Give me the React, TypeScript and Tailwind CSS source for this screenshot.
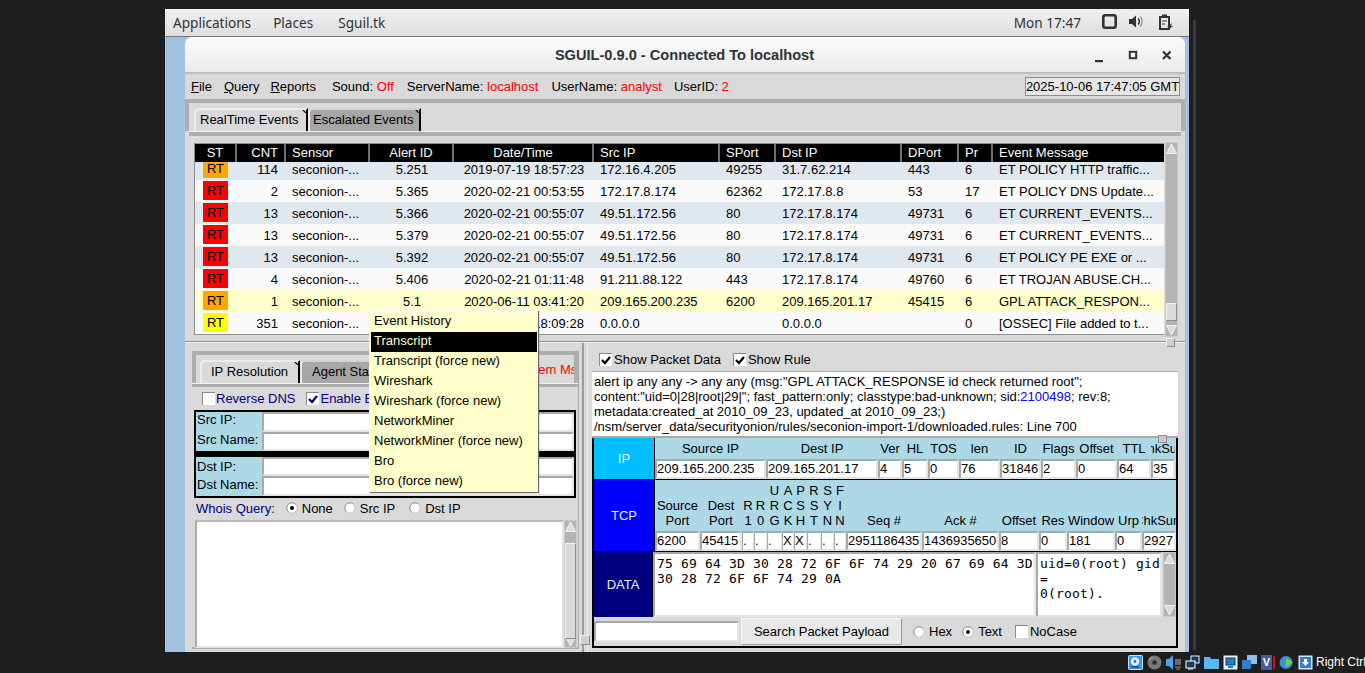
import React from "react";

const sunken = "border-2 border-t-[#a9a9a9] border-l-[#a9a9a9] border-b-[#e4e4e4] border-r-[#e4e4e4] bg-white";
const sunkenThin = "border-t-2 border-b-2 border-l border-r border-t-[#a9a9a9] border-l-[#a9a9a9] border-b-[#e4e4e4] border-r-[#e4e4e4] bg-white";

function Check({ on, color = "#000" }: { on?: boolean; color?: string }) {
  return (
    <span className="block w-[13px] h-[13px] shrink-0 bg-white border-t border-l border-[#8a8a8a]">
      {on && (
        <svg width="12" height="12" viewBox="0 0 12 12" className="block">
          <path d="M2 6 L5 9 L10 3" fill="none" stroke={color} strokeWidth="2.2" />
        </svg>
      )}
    </span>
  );
}

function Radio({ on }: { on?: boolean }) {
  return (
    <svg width="12" height="12" viewBox="0 0 12 12" className="shrink-0 block">
      <circle cx="6" cy="6" r="5.2" fill="#fff" stroke="#c4c4c4" />
      <path d="M2.3 9.7 A5.2 5.2 0 0 1 9.7 2.3" fill="none" stroke="#9a9a9a" />
      {on && <circle cx="6" cy="6" r="2" fill="#000" />}
    </svg>
  );
}

function Scrollbar({ className = "", thumbTop = 0, thumbH = 0 }: { className?: string; thumbTop?: number; thumbH?: number }) {
  return (
    <div className={"w-[13px] flex flex-col bg-[#b3b3b3] border border-[#c9c9c9] " + className}>
      <svg width="11" height="11" viewBox="0 0 11 11" className="block shrink-0">
        <path d="M5.5 1 L10.5 10.5 L0.5 10.5 Z" fill="#dcdcdc" stroke="#f2f2f2" />
      </svg>
      <div className="flex-1 relative">
        {thumbH > 0 && <div className="absolute left-0 w-[11px] bg-[#dadada] border border-t-[#f2f2f2] border-l-[#f2f2f2] border-b-[#8c8c8c] border-r-[#8c8c8c]" style={{ top: thumbTop, height: thumbH }} />}
      </div>
      <svg width="11" height="11" viewBox="0 0 11 11" className="block shrink-0">
        <path d="M5.5 10 L10.5 0.5 L0.5 0.5 Z" fill="#dcdcdc" stroke="#f2f2f2" />
      </svg>
    </div>
  );
}

const cols = ["ST", "CNT", "Sensor", "Alert ID", "Date/Time", "Src IP", "SPort", "Dst IP", "DPort", "Pr", "Event Message"];
const hAlign = ["text-center", "text-right pr-[6px]", "pl-[6px]", "text-center", "text-center", "pl-[6px]", "pl-[6px]", "pl-[6px]", "pl-[6px]", "pl-[6px]", "pl-[6px]"];

const rows: [string, string, string, string, string, string, string, string, string, string, string][] = [
  ["#ffa500", "114", "5.251", "2019-07-19 18:57:23", "172.16.4.205", "49255", "31.7.62.214", "443", "6", "ET POLICY HTTP traffic...", "#dfe7ef"],
  ["#ff0000", "2", "5.365", "2020-02-21 00:53:55", "172.17.8.174", "62362", "172.17.8.8", "53", "17", "ET POLICY DNS Update...", "#fafafa"],
  ["#ff0000", "13", "5.366", "2020-02-21 00:55:07", "49.51.172.56", "80", "172.17.8.174", "49731", "6", "ET CURRENT_EVENTS...", "#dfe7ef"],
  ["#ff0000", "13", "5.379", "2020-02-21 00:55:07", "49.51.172.56", "80", "172.17.8.174", "49731", "6", "ET CURRENT_EVENTS...", "#fafafa"],
  ["#ff0000", "13", "5.392", "2020-02-21 00:55:07", "49.51.172.56", "80", "172.17.8.174", "49731", "6", "ET POLICY PE EXE or ...", "#dfe7ef"],
  ["#ff0000", "4", "5.406", "2020-02-21 01:11:48", "91.211.88.122", "443", "172.17.8.174", "49760", "6", "ET TROJAN ABUSE.CH...", "#fafafa"],
  ["#ffa500", "1", "5.1", "2020-06-11 03:41:20", "209.165.200.235", "6200", "209.165.201.17", "45415", "6", "GPL ATTACK_RESPON...", "#ffffcc"],
  ["#ffff00", "351", "", "2020-06-11 18:09:28", "0.0.0.0", "", "0.0.0.0", "", "0", "[OSSEC] File added to t...", "#fafafa"],
];

const menu = ["Event History", "Transcript", "Transcript (force new)", "Wireshark", "Wireshark (force new)", "NetworkMiner", "NetworkMiner (force new)", "Bro", "Bro (force new)"];

const ipCols = [
  ["Source IP", "209.165.200.235", 111], ["Dest IP", "209.165.201.17", 112], ["Ver", "4", 24], ["HL", "5", 26], ["TOS", "0", 31], ["len", "76", 41],
  ["ID", "31846", 41], ["Flags", "2", 35], ["Offset", "0", 41], ["TTL", "64", 34], ["ChkSum", "35", 24],
] as const;

const tcpCols: [string[], string, number][] = [
  [["Source", "Port"], "6200", 45], [["Dest", "Port"], "45415", 42], [["R", "1"], ".", 12], [["R", "0"], ".", 13], [["U", "R", "G"], ".", 15],
  [["A", "C", "K"], "X", 12], [["P", "S", "H"], "X", 13], [["R", "S", "T"], ".", 14], [["S", "Y", "N"], ".", 13], [["F", "I", "N"], ".", 12],
  [["Seq #"], "2951186435", 76], [["Ack #"], "1436935650", 77], [["Offset"], "8", 40], [["Res"], "0", 28], [["Window"], "181", 48], [["Urp"], "0", 27], [["ChkSum"], "2927", 34],
];

function Tab({ label, active, w, pl }: { label: string; active?: boolean; w: string; pl: string }) {
  return (
    <div className={`relative h-full ${w} ${pl} pb-[3px] shrink-0 flex items-center rounded-tl-[5px] border-t-2 border-l-2 border-[#ececec] border-r-2 border-r-black whitespace-nowrap overflow-hidden ${active ? "bg-[#d9d9d9]" : "bg-[#a6a6a6] border-t-[#d4d4d4] border-l-0"}`}>
      {label}
      <svg width="5" height="5" viewBox="0 0 5 5" className="absolute right-0 -top-[2px]">
        <path d="M0 0 L5 5" stroke="#000" strokeWidth="1.2" />
      </svg>
    </div>
  );
}

function Field({ label, h, lift }: { label: string; h: string; lift?: boolean }) {
  return (
    <div className={"flex items-stretch " + h}>
      <div className={"pl-[1px] w-[66px] shrink-0 flex items-center " + (lift ? "pb-[4px]" : "")}>{label}</div>
      <div className={sunken + " flex-1"} />
    </div>
  );
}

function Icons() {
  return (
    <div className="flex items-center gap-[4px] mr-[3px]">
      <svg width="15" height="15" viewBox="0 0 15 15"><rect x="0.5" y="0.5" width="14" height="14" rx="1" fill="#3f97e6" stroke="#bfe0ff" /><circle cx="7" cy="6.5" r="4.2" fill="#dff0ff" /><circle cx="7" cy="6.5" r="1.4" fill="#2a6fb8" /><path d="M3 12h8" stroke="#123a66" strokeWidth="1.4" /></svg>
      <svg width="15" height="15" viewBox="0 0 15 15"><circle cx="7.5" cy="7.5" r="7" fill="#777" /><circle cx="7.5" cy="7.5" r="2.2" fill="#2a2a2a" /><path d="M2.5 5a6 6 0 0 1 3-3" stroke="#9c9c9c" strokeWidth="1.4" fill="none" /></svg>
      <svg width="15" height="15" viewBox="0 0 15 15"><path d="M0 4h3l4-4v15l-4-4H0z" fill="#45a6e8" /><rect x="9" y="4" width="6" height="6" fill="#6b6b6b" /><path d="M9 12h6M10 14h4" stroke="#6b6b6b" strokeWidth="1.4" /></svg>
      <svg width="15" height="15" viewBox="0 0 15 15"><rect x="6" y="1" width="8" height="7" fill="#163a66" stroke="#eaf4ff" /><rect x="1" y="6" width="9" height="7" fill="#163a66" stroke="#fff" /><path d="M3 14h5" stroke="#fff" /></svg>
      <svg width="15" height="15" viewBox="0 0 15 15"><path d="M0 2h6l1 2h8v10H0z" fill="#5ab6ec" /></svg>
      <svg width="15" height="15" viewBox="0 0 15 15"><rect x="0.5" y="0.5" width="14" height="14" fill="#dff0ff" /><rect x="3" y="3" width="9" height="7" fill="#2a76c8" stroke="#123a66" /><rect x="5" y="11" width="5" height="2" fill="#2a76c8" /></svg>
      <svg width="15" height="15" viewBox="0 0 15 15"><rect x="5" y="0" width="10" height="9" fill="#8cc0ee" /><rect x="0" y="5" width="9" height="9" fill="#2f7fd0" /></svg>
      <div className="flex items-center gap-[1px]">
        <div className="w-[11px] h-[15px] bg-[#4a5a9a] flex items-center justify-center text-white text-[11px] font-bold leading-none">V</div>
        <div className="w-[2px] h-[13px] bg-[#d01010]" />
      </div>
      <svg width="15" height="15" viewBox="0 0 15 15"><circle cx="7" cy="7.5" r="6.5" fill="#3c8fd8" /><path d="M7 3l7 4.5-7 4.5z" fill="#70d040" /></svg>
      <svg width="15" height="15" viewBox="0 0 15 15"><rect x="0.5" y="0.5" width="14" height="14" fill="#cfe8ff" /><rect x="2" y="2" width="11" height="11" fill="#2f7fd0" /><path d="M7.5 11L4 7h2V4h3v3h2z" fill="#fff" /></svg>
    </div>
  );
}

export default function App() {
  return (
    <div className="w-[1365px] h-[673px] bg-[#1e1e1e] overflow-hidden relative text-[13px] leading-[15px] text-black" style={{ fontFamily: '"Liberation Sans", Arial, sans-serif' }}>
      <div className="absolute left-[1193px] top-[20px] w-[3px] h-[630px] bg-[#3a3a3a]" />
      {/* desktop */}
      <div className="absolute left-[165px] top-[9px] w-[1024px] h-[643px] bg-[#a3c1e0] flex flex-col overflow-hidden">
        {/* gnome bar */}
        <div className="h-[28px] shrink-0 flex items-center pl-[8px] pr-[15px] pb-[1px] bg-gradient-to-b from-[#f0f0f0] to-[#dedede] border-b border-[#777] text-[#2e3436] text-[13.6px]" style={{ fontFamily: '"Noto Sans", sans-serif' }}>
          <span>Applications</span>
          <span className="ml-[22px]">Places</span>
          <span className="ml-[25px]">Sguil.tk</span>
          <span className="ml-auto">Mon 17:47</span>
          <svg width="16" height="16" viewBox="0 0 16 16" className="ml-[21px]"><rect x="1.3" y="1.3" width="12.4" height="12.4" rx="2" fill="none" stroke="#2e3436" strokeWidth="2.6" /></svg>
          <svg width="16" height="16" viewBox="0 0 16 16" className="ml-[10px]"><path d="M1 5h3l4-3.5v12L4 10H1z" fill="#2e3436" /><path d="M10 4.5a4 4 0 0 1 0 6" fill="none" stroke="#2e3436" strokeWidth="1.5" /><path d="M12 2.5a7 7 0 0 1 0 10" fill="none" stroke="#9a9a9a" strokeWidth="1.5" /></svg>
          <svg width="16" height="17" viewBox="0 0 16 17" className="ml-[14px]"><path d="M2 3h9v12H2z" fill="none" stroke="#2e3436" strokeWidth="2" /><rect x="4" y="0.5" width="5" height="3" fill="#2e3436" /><path d="M4 7h5M4 10h3" stroke="#2e3436" /><path d="M9 13l5-4-1 3h2l-5 4 1-3z" fill="#2e3436" /></svg>
        </div>

        {/* window */}
        <div className="ml-[20px] w-[1000px] flex-1 flex flex-col rounded-t-[7px] overflow-hidden bg-[#d9d9d9]">
          <div className="h-[37px] shrink-0 relative flex items-center justify-center pt-[2px] pr-[1px] bg-gradient-to-b from-[#fbfbfb] to-[#ebebeb] border-b-2 border-[#bdbdbd] text-[#2e3436] font-bold text-[14.6px]">
            <span>SGUIL-0.9.0 - Connected To localhost</span>
            <div className="absolute right-[11px] top-[13px] flex items-center gap-[18px]">
              <svg width="16" height="14" viewBox="0 0 16 14"><rect x="3" y="10" width="8" height="2.2" fill="#2e3436" /></svg>
              <svg width="16" height="14" viewBox="0 0 16 14"><rect x="3.8" y="1.8" width="6.4" height="6.4" fill="none" stroke="#2e3436" strokeWidth="2" /></svg>
              <svg width="14" height="14" viewBox="0 0 14 14"><path d="M3 1.5l7.5 7.5M10.5 1.5L3 9" stroke="#2e3436" strokeWidth="2.2" /></svg>
            </div>
          </div>

          {/* menu row */}
          <div className="h-[25px] shrink-0 flex items-center pl-[6px] pr-[5px] whitespace-nowrap">
            <span><u>F</u>ile</span>
            <span className="ml-[12px]"><u>Q</u>uery</span>
            <span className="ml-[11px]"><u>R</u>eports</span>
            <span className="ml-[16px]">Sound: <span className="text-[#ff0000]">Off</span></span>
            <span className="ml-[13px]">ServerName: <span className="text-[#ff0000]">localhost</span></span>
            <span className="ml-[13px]">UserName: <span className="text-[#ff0000]">analyst</span></span>
            <span className="ml-[12px]">UserID: <span className="text-[#ff0000]">2</span></span>
            <span className="ml-auto w-[155px] h-[19px] border border-[#8e8e8e] bg-[#e6e6e6] flex items-center justify-center overflow-hidden">2025-10-06 17:47:05 GMT</span>
          </div>

          {/* notebook */}
          <div className="border-t-[4px] border-x-[4px] border-[#adadad] h-[32px] shrink-0 bg-[#d9d9d9] pt-[5px] pl-[5px]">
            <div className="h-[23px] flex">
              <Tab label="RealTime Events" active w="w-[114px]" pl="pl-[4px]" />
              <Tab label="Escalated Events" w="w-[113px]" pl="pl-[3px]" />
            </div>
          </div>
          <div className="h-[5px] ml-[4px] mr-[4px] bg-[#adadad] shrink-0 border-t border-[#f0f0f0]" />

          {/* events */}
          <div className="h-[206px] shrink-0 pl-[9px] pr-[7px] pt-[7px] flex gap-[1px] border-b border-[#8f8f8f]">
            <div className="w-[971px] h-[192px] border border-[#8e8e8e] border-r-0 flex flex-col bg-[#d9d9d9]">
              <div className="grid grid-cols-[42px_49px_84px_84px_140px_126px_56px_126px_57px_34px_171px] h-[18px] bg-black text-white shrink-0 leading-[17px]">
                {cols.map((c, i) => (
                  <div key={c} className={"border-r-2 border-[#6f6f6f] last:border-r-0 " + hAlign[i]}>{c}</div>
                ))}
              </div>
              <div className="flex-1 overflow-hidden">
                <div className="-mt-[4px]">
                  {rows.map((r, i) => (
                    <div key={i} className="grid grid-cols-[42px_49px_84px_84px_140px_126px_56px_126px_57px_34px_171px] h-[22px] items-center" style={{ background: r[10] }}>
                      <div className="flex justify-center -mt-[1px] pr-[1px]"><span className="w-[25px] h-[19px] flex items-center justify-center" style={{ background: r[0] }}>RT</span></div>
                      <div className="text-right pr-[8px]">{r[1]}</div>
                      <div className="pl-[6px]">seconion-...</div>
                      <div className="text-center">{r[2]}</div>
                      <div className="text-center">{r[3]}</div>
                      <div className="pl-[6px]">{r[4]}</div>
                      <div className="pl-[6px]">{r[5]}</div>
                      <div className="pl-[6px]">{r[6]}</div>
                      <div className="pl-[6px]">{r[7]}</div>
                      <div className="pl-[6px]">{r[8]}</div>
                      <div className="pl-[6px] whitespace-nowrap">{r[9]}</div>
                    </div>
                  ))}
                </div>
              </div>
            </div>
            <Scrollbar className="h-[195px] -mt-[1px]" thumbTop={149} thumbH={18} />
          </div>

          {/* lower */}
          <div className="flex-1 flex min-h-0 border-t border-[#efefef]">
            {/* left pane */}
            <div className="w-[399px] shrink-0 pl-[7px] pt-[8px] border-r-2 border-[#9a9a9a]">
              <div className="w-[387px] h-[298px] border-r border-b-2 border-[#ababab]">
                <div className="w-[386px] border-t-[4px] border-x-[4px] border-[#adadad] bg-[#d9d9d9] pl-[4px] pt-[5px] h-[32px]">
                  <div className="h-[23px] flex overflow-hidden">
                    <Tab label="IP Resolution" active w="w-[100px]" pl="pl-[9px]" />
                    <Tab label="Agent Status" w="w-[160px]" pl="pl-[10px]" />
                    <div className="flex-1 pl-[53px] pb-[3px] text-[#ff0000] overflow-hidden whitespace-nowrap leading-[20px]">System Msgs</div>
                  </div>
                </div>
                <div className="w-[386px] h-[4px] bg-[#adadad] border-t border-[#f0f0f0]" />
                <div className="flex items-center h-[23px] pl-[10px] text-[#000080] whitespace-nowrap">
                  <Check />
                  <span className="ml-[1px]">Reverse DNS</span>
                  <span className="ml-[11px]"><Check on color="#000080" /></span>
                  <span className="ml-[1px]">Enable External DNS</span>
                </div>
                <div className="border-2 border-black w-[382px] ml-[2px] bg-[#add8e6] h-[43px] flex flex-col">
                  <Field label="Src IP:" h="h-[20px]" lift />
                  <Field label="Src Name:" h="h-[20px]" lift />
                </div>
                <div className="border-2 border-t-[4px] border-black w-[382px] ml-[2px] bg-[#add8e6] h-[45px] flex flex-col">
                  <Field label="Dst IP:" h="h-[19px]" />
                  <Field label="Dst Name:" h="h-[20px]" lift />
                </div>
                <div className="flex items-center h-[20px] pl-[4px] whitespace-nowrap">
                  <span className="text-[#000080]">Whois Query:</span>
                  <span className="ml-[11px]"><Radio on /></span><span className="ml-[4px]">None</span>
                  <span className="ml-[11px]"><Radio /></span><span className="ml-[4px]">Src IP</span>
                  <span className="ml-[14px]"><Radio /></span><span className="ml-[4px]">Dst IP</span>
                </div>
                <div className="flex h-[128px] ml-[3px] mt-[2px]">
                  <div className={sunken + " w-[369px] border-t-[#b8b8b8]"} />
                  <Scrollbar className="h-[128px]" thumbTop={11} thumbH={96} />
                </div>
              </div>
            </div>

            {/* right pane */}
            <div className="flex-1 pl-[4px] border-l border-[#efefef] ml-[3px] relative">
              <div className="flex items-center h-[28px] pt-[5px] pl-[7px] whitespace-nowrap">
                <Check on />
                <span className="ml-[2px]">Show Packet Data</span>
                <span className="ml-[12px]"><Check on /></span>
                <span className="ml-[2px]">Show Rule</span>
              </div>
              <div className="bg-white border-t border-b-2 border-[#a9a9a9] w-[586px] h-[67px] pl-[2px] pt-[2px] whitespace-nowrap overflow-hidden">
                <div>alert ip any any -&gt; any any (msg:"GPL ATTACK_RESPONSE id check returned root";</div>
                <div>content:"uid=0|28|root|29|"; fast_pattern:only; classtype:bad-unknown; sid:<span className="text-[#0000ff]">2100498</span>; rev:8;</div>
                <div>metadata:created_at 2010_09_23, updated_at 2010_09_23;)</div>
                <div>/nsm/server_data/securityonion/rules/seconion-import-1/downloaded.rules: Line 700</div>
              </div>
              {/* packet */}
              <div className="border-x-2 border-black w-[586px] bg-black flex flex-col gap-[1px]">
                <div className="flex h-[41px] gap-[1px]">
                  <div className="w-[60px] bg-[#00bfff] text-[#e8f4ff] flex items-center justify-center">IP</div>
                  <div className="flex-1 bg-[#add8e6] flex items-end overflow-hidden">
                    {ipCols.map(([h, v, w]) => (
                      <div key={h} className="flex flex-col items-center shrink-0 overflow-hidden" style={{ width: w }}>
                        <div className="h-[20px] leading-[20px] whitespace-nowrap">{h}</div>
                        <div className={sunken + " w-full h-[20px] leading-[15px] overflow-hidden whitespace-nowrap text-left"}>{v}</div>
                      </div>
                    ))}
                  </div>
                </div>
                <div className="flex h-[71px] gap-[1px]">
                  <div className="w-[60px] bg-[#0000ff] text-[#e8f4ff] flex items-center justify-center">TCP</div>
                  <div className="flex-1 bg-[#add8e6] flex items-end overflow-hidden">
                    {tcpCols.map(([h, v, w], i) => (
                      <div key={i} className="flex flex-col items-center shrink-0 overflow-hidden" style={{ width: w }}>
                        <div className="flex flex-col items-center leading-[15px] mb-[3px]">
                          {h.map((l, j) => <div key={j} className="whitespace-nowrap">{l}</div>)}
                        </div>
                        <div className={(w <= 15 ? sunkenThin : sunken) + " w-full h-[20px] leading-[16px] overflow-hidden whitespace-nowrap text-left"}>{v}</div>
                      </div>
                    ))}
                  </div>
                </div>
                <div className="flex h-[65px] gap-[1px] items-stretch">
                  <div className="w-[60px] bg-[#000080] text-[#e8f4ff] flex items-center justify-center">DATA</div>
                  <div className="flex-1 flex bg-[#d9d9d9] tracking-[0.17px]" style={{ fontFamily: '"DejaVu Sans Mono", monospace' }}>
                    <div className={sunken + " w-[383px] pl-[2px] pt-[2px] whitespace-nowrap"}>
                      <div>75 69 64 3D 30 28 72 6F 6F 74 29 20 67 69 64 3D</div>
                      <div>30 28 72 6F 6F 74 29 0A</div>
                    </div>
                    <div className={sunken + " w-[126px] pl-[2px] pt-[2px] whitespace-nowrap"}>
                      <div>uid=0(root) gid</div>
                      <div>=</div>
                      <div>0(root).</div>
                    </div>
                    <Scrollbar thumbTop={0} thumbH={0} className="h-[65px] ml-[1px]" />
                  </div>
                </div>
              </div>
              <div className="border-2 border-t-0 border-black w-[586px] h-[31px] bg-[#d9d9d9] flex items-center whitespace-nowrap">
                <div className={sunken + " w-[145px] h-[21px]"} />
                <div className="ml-[2px] w-[161px] h-[27px] bg-[#e8e8e8] border border-b-[#9a9a9a] border-r-[#9a9a9a] border-t-[#f5f5f5] border-l-[#f5f5f5] flex items-center justify-center">Search Packet Payload</div>
                <span className="ml-[11px]"><Radio /></span><span className="ml-[4px]">Hex</span>
                <span className="ml-[10px]"><Radio on /></span><span className="ml-[4px]">Text</span>
                <span className="ml-[13px]"><Check /></span><span className="ml-[2px]">NoCase</span>
              </div>
              <div className="absolute right-[18px] top-[92px] w-[9px] h-[8px] bg-[#c9c9c9] border border-[#8f8f8f]" />
            </div>
          </div>
        </div>

        {/* pane sash handles */}
        <div className="absolute left-[1001px] top-[329px] w-[9px] h-[9px] bg-[#cfcfcf] border border-t-[#f2f2f2] border-l-[#f2f2f2] border-b-[#8f8f8f] border-r-[#8f8f8f] z-10" />
        <div className="absolute left-[415px] top-[626px] w-[10px] h-[10px] bg-[#cfcfcf] border border-t-[#f2f2f2] border-l-[#f2f2f2] border-b-[#8f8f8f] border-r-[#8f8f8f] z-10" />

        {/* context menu */}
        <div className="absolute left-[204px] top-[301px] w-[169px] h-[182px] bg-[#ffffcc] border-t border-l border-[#f5f5f5] shadow-[1px_1px_1px_#6a6a6a] pt-[1px] z-20">
          {menu.map((m, i) => (
            <div key={m} className={"h-[20px] pl-[3px] mx-[1px] leading-[18px] whitespace-nowrap " + (i === 1 ? "bg-black text-[#ffffcc]" : "")}>{m}</div>
          ))}
        </div>
      </div>

      {/* status bar */}
      <div className="absolute left-0 right-0 bottom-0 h-[21px] flex items-center justify-end text-white text-[12px] whitespace-nowrap">
        <Icons />
        <span className="w-[49px] overflow-hidden">Right Ctrl</span>
      </div>
    </div>
  );
}
